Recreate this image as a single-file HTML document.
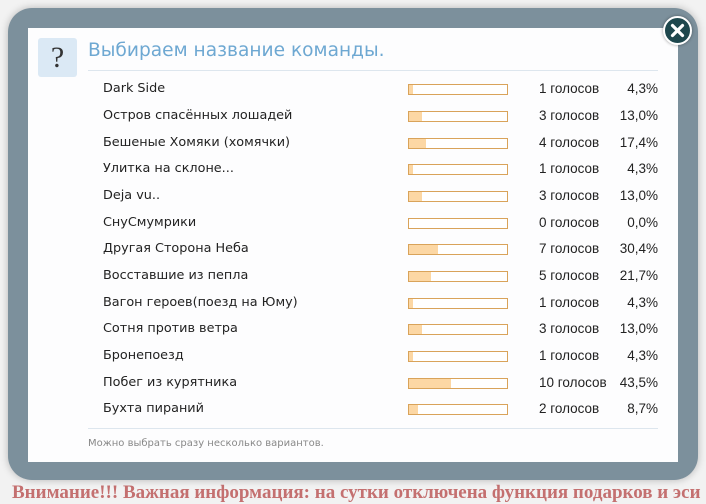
<!DOCTYPE html>
<html><head><meta charset="utf-8"><style>
*{margin:0;padding:0;box-sizing:border-box}
body{width:706px;height:491px;overflow:hidden;background:#f2f2f2;font-family:"DejaVu Sans","Liberation Sans",sans-serif;position:relative}
.bgt{position:absolute;left:104px;top:14px;font-size:12px;color:#bbb}
.bgbox{position:absolute;left:88px;top:15px;width:11px;height:11px;border:1px solid #ccc}
.red{position:absolute;left:12px;top:482px;font-family:"Liberation Serif",serif;font-size:19px;font-weight:bold;color:#c47070;white-space:nowrap}
.frame{position:absolute;left:8px;top:8px;width:690px;height:472px;background:#7c909c;border-radius:24px;box-shadow:0 0 8px rgba(0,0,0,.25)}
.content{position:absolute;left:28px;top:28px;width:650px;height:434px;background:#fdfdfe}
.q{position:absolute;left:38px;top:38px;width:39px;height:39px;background:#dbe9f5;border-radius:3px;font-family:"Liberation Serif",serif;font-size:30px;color:#333;text-align:center;line-height:40px}
.title{position:absolute;left:88px;top:40px;font-size:18.6px;color:#6ea8d2;white-space:nowrap}
.rule{position:absolute;left:88px;width:570px;height:1px;background:#dde6ee}
.row{position:absolute;left:0;width:706px;height:20px;font-size:12.8px;color:#222}
.row .n{position:absolute;left:103px;top:1px}
.row .b{position:absolute;left:408px;top:4px;width:100px;height:11px;border:1px solid #d9a35a;background:#fff}
.row .b i{display:block;height:100%;background:#fcd7a4}
.row .v{position:absolute;left:539px;top:1px;font-family:"Liberation Sans",sans-serif;font-size:13.5px}
.row .p{position:absolute;right:48px;top:1px;font-family:"Liberation Sans",sans-serif;font-size:13.5px}
.note{position:absolute;left:88px;top:438px;font-size:10px;color:#888}
.close{position:absolute;left:663px;top:16px;width:29px;height:29px;border-radius:50%;background:#1e474d;border:2px solid #fff;box-shadow:0 0 3px rgba(0,0,0,.4)}
</style></head><body>
<div class="bgbox"></div><div class="bgt">Dark Side</div>
<div class="red">Внимание!!! Важная информация: на сутки отключена функция подарков и эси</div>
<div class="frame"></div>
<div class="content"></div>
<div class="q">?</div>
<div class="title">Выбираем название команды.</div>
<div class="rule" style="top:70px"></div>
<div class="row" style="top:80px"><span class="n">Dark Side</span><span class="b"><i style="width:4%"></i></span><span class="v">1 голосов</span><span class="p">4,3%</span></div>
<div class="row" style="top:107px"><span class="n">Остров спасённых лошадей</span><span class="b"><i style="width:13%"></i></span><span class="v">3 голосов</span><span class="p">13,0%</span></div>
<div class="row" style="top:134px"><span class="n">Бешеные Хомяки (хомячки)</span><span class="b"><i style="width:17%"></i></span><span class="v">4 голосов</span><span class="p">17,4%</span></div>
<div class="row" style="top:160px"><span class="n">Улитка на склоне...</span><span class="b"><i style="width:4%"></i></span><span class="v">1 голосов</span><span class="p">4,3%</span></div>
<div class="row" style="top:187px"><span class="n">Deja vu..</span><span class="b"><i style="width:13%"></i></span><span class="v">3 голосов</span><span class="p">13,0%</span></div>
<div class="row" style="top:214px"><span class="n">СнуСмумрики</span><span class="b"><i style="width:0%"></i></span><span class="v">0 голосов</span><span class="p">0,0%</span></div>
<div class="row" style="top:240px"><span class="n">Другая Сторона Неба</span><span class="b"><i style="width:30%"></i></span><span class="v">7 голосов</span><span class="p">30,4%</span></div>
<div class="row" style="top:267px"><span class="n">Восставшие из пепла</span><span class="b"><i style="width:22%"></i></span><span class="v">5 голосов</span><span class="p">21,7%</span></div>
<div class="row" style="top:294px"><span class="n">Вагон героев(поезд на Юму)</span><span class="b"><i style="width:4%"></i></span><span class="v">1 голосов</span><span class="p">4,3%</span></div>
<div class="row" style="top:320px"><span class="n">Сотня против ветра</span><span class="b"><i style="width:13%"></i></span><span class="v">3 голосов</span><span class="p">13,0%</span></div>
<div class="row" style="top:347px"><span class="n">Бронепоезд</span><span class="b"><i style="width:4%"></i></span><span class="v">1 голосов</span><span class="p">4,3%</span></div>
<div class="row" style="top:374px"><span class="n">Побег из курятника</span><span class="b"><i style="width:43%"></i></span><span class="v">10 голосов</span><span class="p">43,5%</span></div>
<div class="row" style="top:400px"><span class="n">Бухта пираний</span><span class="b"><i style="width:9%"></i></span><span class="v">2 голосов</span><span class="p">8,7%</span></div>
<div class="rule" style="top:428px"></div>
<div class="note">Можно выбрать сразу несколько вариантов.</div>
<div class="close"><svg width="25" height="25" viewBox="0 0 25 25"><path d="M7.5 7.5L17.5 17.5M17.5 7.5L7.5 17.5" stroke="#fff" stroke-width="3.2" stroke-linecap="round"/></svg></div>
</body></html>
